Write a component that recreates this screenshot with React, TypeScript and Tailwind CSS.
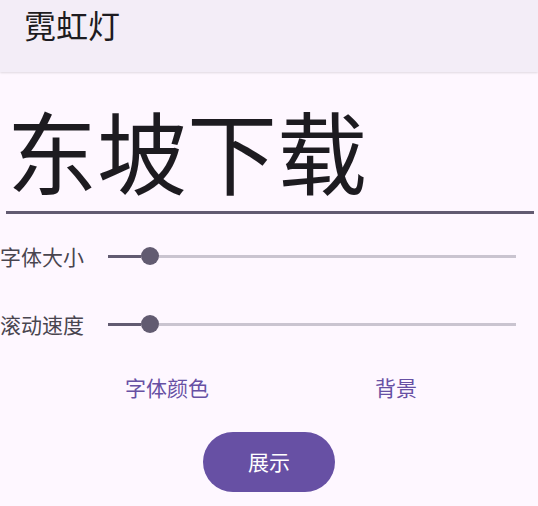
import React from "react";

const font = { fontFamily: '"Noto Sans CJK SC", "Noto Sans", sans-serif' };

function Slider() {
  return (
    <div className="relative flex h-[18px] w-[408px] items-center">
      <div className="h-[3px] w-[33px] bg-[#625b71]" />
      <div className="h-[18px] w-[18px] rounded-full bg-[#625b71]" />
      <div className="h-[3px] flex-1 bg-[#cac4d0]" />
    </div>
  );
}

export default function App() {
  return (
    <div className="min-h-[506px] w-[538px] bg-[#fef7ff]" style={font}>
      <div className="flex h-[72px] items-start bg-[#f3edf7] pl-[24px] pt-[4px] shadow-[0_1px_2px_rgba(0,0,0,0.12)]">
        <span className="text-[32px] leading-[40px] text-[#1d1b20]">霓虹灯</span>
      </div>
      <div className="ml-[6px] mr-[4px] mt-[32px] border-b-[3px] border-[#625b71] pb-[17px] pl-[1px]">
        <div className="text-[90px] leading-[90px] text-[#1d1b20]">东坡下载</div>
      </div>
      <div className="mt-[30px] flex items-center">
        <span className="w-[108px] text-[21px] leading-[24px] text-[#49454f]">字体大小</span>
        <Slider />
      </div>
      <div className="mt-[44px] flex items-center">
        <span className="w-[108px] text-[21px] leading-[24px] text-[#49454f]">滚动速度</span>
        <Slider />
      </div>
      <div className="mt-[39px] flex items-center pl-[125px]">
        <span className="text-[21px] leading-[24px] text-[#6750a4]">字体颜色</span>
        <span className="ml-[166px] text-[21px] leading-[24px] text-[#6750a4]">背景</span>
      </div>
      <div className="mt-[33px] flex justify-center">
        <div className="flex h-[60px] w-[132px] items-center justify-center rounded-full bg-[#6750a4] text-[21px] text-white">
          展示
        </div>
      </div>
    </div>
  );
}
